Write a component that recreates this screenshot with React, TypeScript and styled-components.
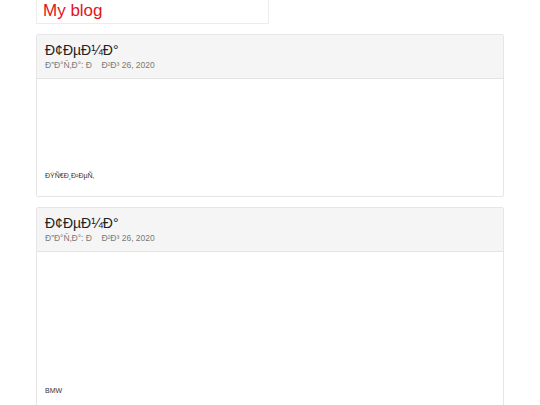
import React from 'react';
import styled, { createGlobalStyle } from 'styled-components';

const GlobalStyle = createGlobalStyle`
  html, body {
    margin: 0;
    padding: 0;
    background: #fff;
    font-family: "Liberation Sans", Arial, sans-serif;
  }
`;

const Page = styled.div`
  padding: 0 36px;
  display: flex;
  flex-direction: column;
  gap: 10px;
`;

const Brand = styled.div`
  width: 233px;
  height: 24px;
  box-sizing: border-box;
  border: 1px solid #ececec;
  border-top: none;
  padding: 0 6px 2px;
  display: flex;
  align-items: center;
  color: #e3141c;
  font-size: 17px;
`;

const Card = styled.div`
  border: 1px solid #e6e6e6;
  border-radius: 2px;
  background: #fff;
`;

const CardHeader = styled.div`
  background: #f5f5f5;
  border-bottom: 1px solid #e3e3e3;
  padding: 6px 8px 7px;
  height: 44px;
  box-sizing: border-box;
`;

const Title = styled.div`
  font-size: 14px;
  color: #222;
  line-height: 18px;
`;

const Meta = styled.div`
  font-size: 8.5px;
  color: #7a7a7a;
  line-height: 12px;
  white-space: pre;
`;

const CardBody = styled.div<{ $space: number }>`
  padding: 0 8px 15px;
  &::before {
    content: '';
    display: block;
    height: ${({ $space }) => $space}px;
  }
`;

const Text = styled.div`
  font-size: 7px;
  color: #333;
  line-height: 10px;
`;

const posts = [
  { title: 'Ð¢ÐµÐ¼Ð°', text: 'ÐŸÑ€Ð¸Ð²ÐµÑ‚', space: 92 },
  { title: 'Ð¢ÐµÐ¼Ð°', text: 'BMW', space: 134 },
];

export default function App() {
  return (
    <>
      <GlobalStyle />
      <Page>
        <Brand>My blog</Brand>
        {posts.map((p, i) => (
          <Card key={i}>
            <CardHeader>
              <Title>{p.title}</Title>
              <Meta>{'Ð”Ð°Ñ‚Ð°: Ð    Ð²Ð³ 26, 2020'}</Meta>
            </CardHeader>
            <CardBody $space={p.space}>
              <Text>{p.text}</Text>
            </CardBody>
          </Card>
        ))}
      </Page>
    </>
  );
}
